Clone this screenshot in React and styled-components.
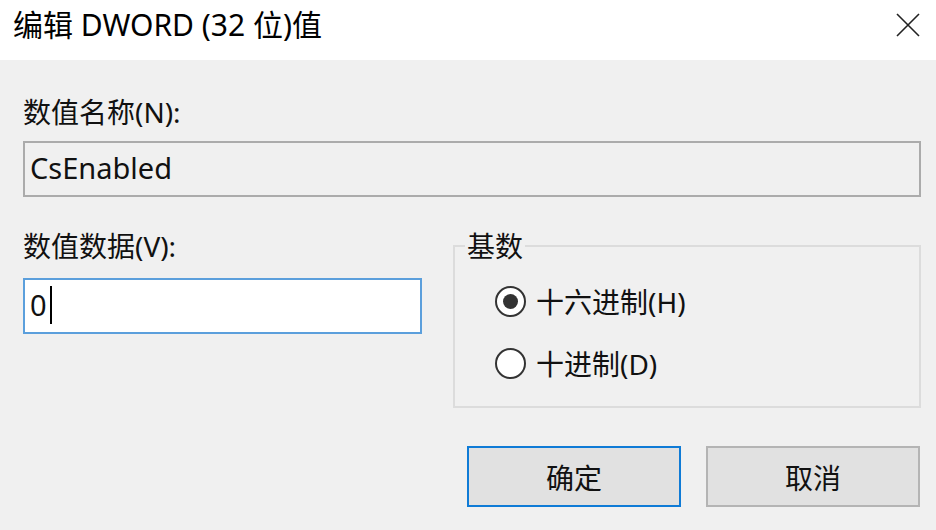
import React from "react"
import styled, { createGlobalStyle } from "styled-components"

const GlobalStyle = createGlobalStyle`
  html, body {
    margin: 0;
    padding: 0;
    background: #f0f0f0;
  }
  body {
    font-family: "Noto Sans", "Noto Sans CJK SC", sans-serif;
    color: #111;
  }
`

const Dialog = styled.div`
  width: 936px;
  height: 530px;
  display: flex;
  flex-direction: column;
  background: #f0f0f0;
  overflow: hidden;
`

const TitleBar = styled.div`
  height: 60px;
  flex: none;
  background: #fff;
  display: flex;
  align-items: center;
  justify-content: space-between;
  padding: 0 16px 10px 13px;
  box-sizing: border-box;
`

const Title = styled.div`
  font-size: 30px;
  line-height: 36px;
  color: #000;
`

const CloseButton = styled.button`
  width: 24px;
  height: 24px;
  padding: 0;
  border: 0;
  background: none;
  display: flex;
`

const Body = styled.div`
  flex: 1;
  padding: 35px 15px 0 23px;
  display: flex;
  flex-direction: column;
`

const Label = styled.div`
  font-size: 28px;
  line-height: 34px;
  height: 34px;
`

const TextBox = styled.div`
  height: 56px;
  box-sizing: border-box;
  margin-top: ${p => p.$gap}px;
  border: 2px solid ${p => (p.$focused ? "#5b9fdc" : "#ababab")};
  background: ${p => (p.$focused ? "#fff" : "#f0f0f0")};
  padding: 0 5px 3px;
  display: flex;
  align-items: center;
  font-size: 29px;
`

const Caret = styled.span`
  display: inline-block;
  width: 2px;
  height: 38px;
  background: #000;
  margin-left: 3px;
`

const Columns = styled.div`
  margin-top: 32px;
  display: grid;
  grid-template-columns: 399px 468px;
  column-gap: 31px;
  align-items: start;
`

const Column = styled.div`
  display: flex;
  flex-direction: column;
`

const Group = styled.fieldset`
  margin: 0;
  height: 179px;
  box-sizing: border-box;
  border: 2px solid #dcdcdc;
  padding: 7px 0 0 40px;
  display: flex;
  flex-direction: column;
`

const Legend = styled.legend`
  font-size: 28px;
  line-height: 34px;
  padding: 0 2px;
  margin-left: -30px;
`

const RadioRow = styled.label`
  display: flex;
  align-items: center;
  height: 62px;
  gap: 10px;
  font-size: 28px;
`

const RadioCircle = styled.span`
  width: 31px;
  height: 31px;
  flex: none;
  box-sizing: border-box;
  border-radius: 50%;
  border: 2px solid #333;
  background: #fff;
  display: flex;
  align-items: center;
  justify-content: center;

  &::after {
    content: "";
    width: 15px;
    height: 15px;
    border-radius: 50%;
    background: #333;
    display: ${p => (p.$checked ? "block" : "none")};
  }
`

const ButtonRow = styled.div`
  margin-top: 38px;
  display: flex;
  justify-content: flex-end;
  gap: 25px;
  padding-right: 1px;
`

const Button = styled.button`
  width: 214px;
  height: 61px;
  box-sizing: border-box;
  background: #e1e1e1;
  border: 2px solid ${p => (p.$primary ? "#0f7bd6" : "#b4b4b4")};
  font-family: inherit;
  font-size: 28px;
  color: #111;
  padding: 0;
`

const radios = [
  { label: "十六进制(H)", checked: true },
  { label: "十进制(D)", checked: false },
]

export default function App() {
  return (
    <Dialog>
      <GlobalStyle />
      <TitleBar>
        <Title>编辑 DWORD (32 位)值</Title>
        <CloseButton aria-label="关闭">
          <svg width="24" height="24" viewBox="0 0 24 24">
            <path d="M1 1 L23 23 M23 1 L1 23" stroke="#222" strokeWidth="1.6" fill="none" />
          </svg>
        </CloseButton>
      </TitleBar>
      <Body>
        <Label>数值名称(N):</Label>
        <TextBox $gap={12}>CsEnabled</TextBox>
        <Columns>
          <Column>
            <Label>数值数据(V):</Label>
            <TextBox $gap={15} $focused>
              0<Caret />
            </TextBox>
          </Column>
          <Group>
            <Legend>基数</Legend>
            {radios.map(r => (
              <RadioRow key={r.label}>
                <RadioCircle $checked={r.checked} />
                {r.label}
              </RadioRow>
            ))}
          </Group>
        </Columns>
        <ButtonRow>
          <Button $primary>确定</Button>
          <Button>取消</Button>
        </ButtonRow>
      </Body>
    </Dialog>
  )
}
